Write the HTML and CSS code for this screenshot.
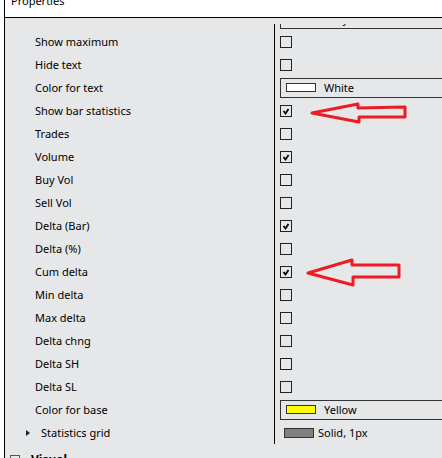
FILE: index.html
```html
<!DOCTYPE html>
<html>
<head>
<meta charset="utf-8">
<title>Properties</title>
<link rel="stylesheet" href="styles.css">
</head>
<body>
<div class="window">
  <div class="header"><div class="title">Properties</div></div>
  <div class="grid">
    <div class="viewport">
      <div class="rows">
        <div class="row"><div class="name"></div><div class="value"><div class="combo"><span class="swatch" style="background:#808080"></span><span>Gray</span></div></div></div>
        <div class="row"><div class="name">Show maximum</div><div class="value"><span class="check"></span></div></div>
        <div class="row"><div class="name">Hide text</div><div class="value"><span class="check"></span></div></div>
        <div class="row"><div class="name">Color for text</div><div class="value"><div class="combo"><span class="swatch" style="background:#ffffff"></span><span>White</span></div></div></div>
        <div class="row"><div class="name">Show bar statistics</div><div class="value"><span class="check checked"><svg viewBox="0 0 10 10" width="10" height="10"><polyline points="2.5,5 4.5,7.5 7.5,3" /></svg></span></div></div>
        <div class="row"><div class="name">Trades</div><div class="value"><span class="check"></span></div></div>
        <div class="row"><div class="name">Volume</div><div class="value"><span class="check checked"><svg viewBox="0 0 10 10" width="10" height="10"><polyline points="2.5,5 4.5,7.5 7.5,3" /></svg></span></div></div>
        <div class="row"><div class="name">Buy Vol</div><div class="value"><span class="check"></span></div></div>
        <div class="row"><div class="name">Sell Vol</div><div class="value"><span class="check"></span></div></div>
        <div class="row"><div class="name">Delta (Bar)</div><div class="value"><span class="check checked"><svg viewBox="0 0 10 10" width="10" height="10"><polyline points="2.5,5 4.5,7.5 7.5,3" /></svg></span></div></div>
        <div class="row"><div class="name">Delta (%)</div><div class="value"><span class="check"></span></div></div>
        <div class="row"><div class="name">Cum delta</div><div class="value"><span class="check checked"><svg viewBox="0 0 10 10" width="10" height="10"><polyline points="2.5,5 4.5,7.5 7.5,3" /></svg></span></div></div>
        <div class="row"><div class="name">Min delta</div><div class="value"><span class="check"></span></div></div>
        <div class="row"><div class="name">Max delta</div><div class="value"><span class="check"></span></div></div>
        <div class="row"><div class="name">Delta chng</div><div class="value"><span class="check"></span></div></div>
        <div class="row"><div class="name">Delta SH</div><div class="value"><span class="check"></span></div></div>
        <div class="row"><div class="name">Delta SL</div><div class="value"><span class="check"></span></div></div>
        <div class="row"><div class="name">Color for base</div><div class="value"><div class="combo"><span class="swatch" style="background:#ffff00"></span><span>Yellow</span></div></div></div>
        <div class="row"><div class="name sub"><span class="expander"></span>Statistics grid</div><div class="value"><span class="line-swatch"></span><span>Solid, 1px</span></div></div>
        <div class="category"><span class="collapse"></span><span class="cat-name">Visual</span></div>
      </div>
    </div>
  </div>
  <svg class="annotations" width="442" height="458" viewBox="0 0 442 458">
    <polygon points="312,113 358,104 358,108 405,107 405,117 359,117 359,122" />
    <polygon points="308,273 352,260 352,265 399,265 399,277 353,277 353,285" />
  </svg>
</div>
</body>
</html>
```

FILE: styles.css
```css
html, body {
  margin: 0;
  padding: 0;
  background: #ffffff;
}

body {
  font-family: "Noto Sans", "Liberation Sans", sans-serif;
  font-size: 11px;
  color: #000000;
  width: 442px;
  height: 458px;
  overflow: hidden;
}

.window {
  margin-left: 4px;
  border-left: 1px solid #000000;
  height: 458px;
  display: flex;
  flex-direction: column;
}

.header {
  height: 17px;
  border-bottom: 1px solid #000000;
  background: #ffffff;
  overflow: hidden;
  padding-left: 6px;
  flex: none;
}

.title {
  line-height: 16px;
  margin-top: -7px;
}

.grid {
  flex: 1;
  background: #e6e7e9;
  padding-top: 6px;
  overflow: hidden;
  display: flex;
  flex-direction: column;
}

.viewport {
  flex: 1;
  overflow: hidden;
}

.rows {
  margin-top: -17px;
}

.row {
  display: grid;
  grid-template-columns: 269px 1fr;
  height: 23px;
  line-height: 23px;
}

.name {
  padding-left: 30px;
  white-space: nowrap;
  display: flex;
  align-items: center;
}

.name.sub {
  padding-left: 21px;
}

.expander {
  width: 0;
  height: 0;
  border-left: 4px solid #222222;
  border-top: 3.5px solid transparent;
  border-bottom: 3.5px solid transparent;
  margin-right: 11px;
}

.value {
  border-left: 1px solid #000000;
  padding-left: 5px;
  display: flex;
  align-items: center;
  white-space: nowrap;
  min-width: 0;
}

.check {
  width: 10px;
  height: 10px;
  border: 1px solid #222222;
  display: flex;
  align-items: center;
  justify-content: center;
}

.check svg polyline {
  fill: none;
  stroke: #000000;
  stroke-width: 1.8;
}

.combo {
  flex: 1;
  height: 18px;
  border: 1px solid #333333;
  border-right: none;
  margin-right: -10px;
  display: flex;
  align-items: center;
  padding-left: 5px;
  line-height: 18px;
}

.swatch {
  width: 28px;
  height: 7px;
  border: 1px solid #333333;
  margin-right: 8px;
  flex: none;
}

.line-swatch {
  width: 28px;
  height: 8px;
  border: 1px solid #333333;
  background: #808080;
  margin-left: 4px;
  margin-right: 4px;
  flex: none;
}

.category {
  height: 23px;
  display: flex;
  align-items: center;
  padding-left: 5px;
  line-height: 23px;
  margin-top: 4px;
}

.collapse {
  width: 8px;
  height: 8px;
  border: 1px solid #555555;
  margin-right: 11px;
}

.cat-name {
  font-weight: bold;
  font-size: 12px;
}

.annotations {
  position: absolute;
  left: 0;
  top: 0;
  pointer-events: none;
}

.annotations polygon {
  fill: none;
  stroke: #ed1c24;
  stroke-width: 3;
  stroke-linejoin: round;
}
```
